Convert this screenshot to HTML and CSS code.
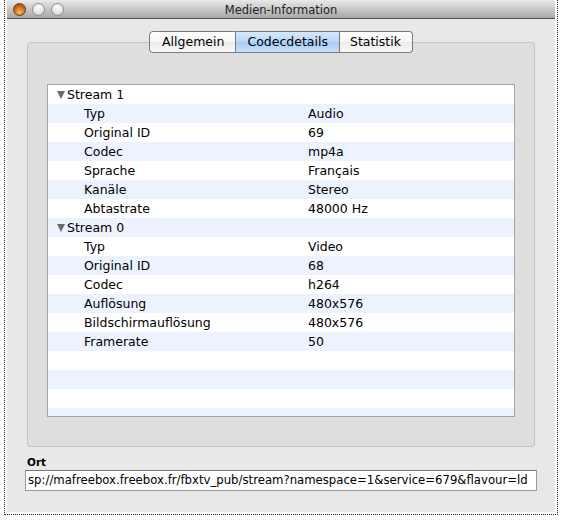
FILE: index.html
```html
<!DOCTYPE html>
<html>
<head>
<meta charset="utf-8">
<link rel="stylesheet" href="styles.css">
</head>
<body>
<div class="window">
  <div class="titlebar">
    <div class="lights">
      <span class="light close"></span>
      <span class="light"></span>
      <span class="light"></span>
    </div>
    <div class="title">Medien-Information</div>
    <div></div>
  </div>
  <div class="content">
    <div class="tabview">
      <div class="tabs">
        <div class="tab">Allgemein</div>
        <div class="tab sel">Codecdetails</div>
        <div class="tab">Statistik</div>
      </div>
      <div class="tabbox">
        <div class="list">
          <div class="row group"><span class="tri"></span><span>Stream 1</span></div>
          <div class="row"><span class="k">Typ</span><span class="v">Audio</span></div>
          <div class="row"><span class="k">Original ID</span><span class="v">69</span></div>
          <div class="row"><span class="k">Codec</span><span class="v">mp4a</span></div>
          <div class="row"><span class="k">Sprache</span><span class="v">Français</span></div>
          <div class="row"><span class="k">Kanäle</span><span class="v">Stereo</span></div>
          <div class="row"><span class="k">Abtastrate</span><span class="v">48000 Hz</span></div>
          <div class="row group"><span class="tri"></span><span>Stream 0</span></div>
          <div class="row"><span class="k">Typ</span><span class="v">Video</span></div>
          <div class="row"><span class="k">Original ID</span><span class="v">68</span></div>
          <div class="row"><span class="k">Codec</span><span class="v">h264</span></div>
          <div class="row"><span class="k">Auflösung</span><span class="v">480x576</span></div>
          <div class="row"><span class="k">Bildschirmauflösung</span><span class="v">480x576</span></div>
          <div class="row"><span class="k">Framerate</span><span class="v">50</span></div>
          <div class="row"></div>
          <div class="row"></div>
          <div class="row"></div>
          <div class="row"></div>
        </div>
      </div>
    </div>
    <div class="ort">Ort</div>
    <div class="field">sp://mafreebox.freebox.fr/fbxtv_pub/stream?namespace=1&amp;service=679&amp;flavour=ld</div>
  </div>
</div>
</body>
</html>
```
FILE: styles.css
```css
html, body {
  margin: 0;
  padding: 0;
  background: #ffffff;
  width: 562px;
  height: 523px;
  overflow: hidden;
}

.window {
  margin-left: 7px;
  width: 548px;
  height: 512px;
  background: #e8e8e8;
  outline: 1px dotted #222;
  outline-offset: 2px;
  font-family: "DejaVu Sans", "Liberation Sans", sans-serif;
  color: #000;
  box-sizing: border-box;
}

.titlebar {
  height: 18px;
  border-bottom: 1px solid #515151;
  background: linear-gradient(#e9e9e9, #c8c8c8 50%, #a6a6a6);
  display: grid;
  grid-template-columns: 1fr auto 1fr;
  align-items: center;
}

.lights {
  display: flex;
  gap: 6px;
  padding-left: 6px;
  padding-top: 1px;
}

.light {
  width: 11px;
  height: 11px;
  border-radius: 50%;
  border: 1px solid #8d8d8d;
  background: radial-gradient(circle at 50% 30%, #ffffff, #e2e2e2 60%, #c4c4c4);
}

.light.close {
  border-color: #6b3a10;
  background: radial-gradient(circle at 50% 75%, #f7b86a, #c96d1c 55%, #8c4209);
}

.title {
  font-size: 11.5px;
  color: #222;
  padding-top: 1px;
}

.content {
  padding: 12px 18px 0 18px;
}

.tabview {
  padding: 0 2px;
}

.tabs {
  display: flex;
  justify-content: center;
  position: relative;
  z-index: 1;
}

.tab {
  height: 20px;
  line-height: 20px;
  font-size: 12.5px;
  border: 1px solid #7a7a7a;
  border-left: none;
  background: linear-gradient(#ffffff, #f6f6f6 50%, #ececec 51%, #f7f7f7);
  padding: 0 13px;
}

.tab:first-child {
  border-left: 1px solid #7a7a7a;
  border-radius: 4px 0 0 4px;
  padding-left: 12px;
  padding-right: 11px;
}

.tab:last-child {
  border-radius: 0 4px 4px 0;
  padding-left: 10px;
  padding-right: 11px;
}

.tab.sel {
  background: linear-gradient(#d6e8fb, #b8d7f7 50%, #a6ccf4 51%, #c6e0fa);
  padding: 0 11px;
}

.tabbox {
  margin-top: -11px;
  height: 405px;
  box-sizing: border-box;
  border: 1px solid #c3c3c3;
  border-radius: 3px;
  background: #dedede;
  padding: 41px 19px 0 19px;
}

.list {
  background: #fff;
  border: 1px solid #a4a4a4;
  height: 331px;
  overflow: hidden;
}

.row {
  height: 19px;
  display: flex;
  align-items: center;
  font-size: 12.5px;
}

.row:nth-child(even) {
  background: #edf3fe;
}

.row.group {
  padding-left: 9px;
}

.tri {
  width: 0;
  height: 0;
  border-left: 4px solid transparent;
  border-right: 4px solid transparent;
  border-top: 8px solid #6a6a6a;
  margin-right: 2px;
  margin-top: 1px;
}

.k {
  width: 224px;
  padding-left: 36px;
}

.ort {
  font-size: 10.5px;
  font-weight: bold;
  padding: 9px 0 0 2px;
  height: 14px;
}

.field {
  width: 512px;
  height: 21px;
  box-sizing: border-box;
  border: 1px solid #9a9a9a;
  border-top-color: #777;
  background: #fff;
  font-size: 11.7px;
  line-height: 19px;
  padding-left: 2px;
  white-space: nowrap;
  overflow: hidden;
}
```
